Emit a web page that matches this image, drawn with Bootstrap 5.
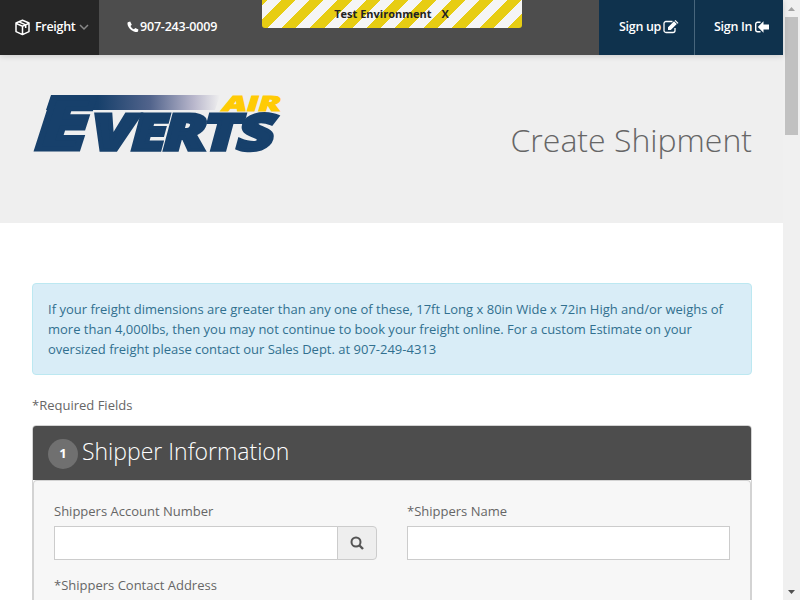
<!DOCTYPE html>
<html lang="en">
<head>
<meta charset="utf-8">
<meta name="viewport" content="width=device-width, initial-scale=1">
<title>Create Shipment</title>
<link href="https://cdn.jsdelivr.net/npm/bootstrap@5.3.0/dist/css/bootstrap.min.css" rel="stylesheet">
<style>
html, body { height: 100%; overflow: hidden; }
body { font-family: "Open Sans", sans-serif; font-size: 13px; line-height: 20px; color: #666; }
.page-area { min-width: 0; }
.topbar { height: 55px; background: #4d4d4d; color: #fff; box-shadow: 0 1px 6px rgba(0,0,0,.16); z-index: 2; font-size: 12.5px; font-weight: 600; letter-spacing: -.3px; flex: none; }
.brand-menu { width: 99px; padding-left: 14px; background: #262626; padding-bottom: 1px; }
.phone-item { padding-left: 28px; padding-bottom: 1px; letter-spacing: -.2px; }
.phone-item span { margin-left: 1px; }
.account-link { background: #0f324d; padding: 0 0 1px 20px; color: #fff; gap: 2px; }
.link-up { width: 95px; }
.link-in { width: 89px; border-left: 1px solid #48667c; padding-left: 19px; }
.env-banner { left: 262px; top: 0; width: 260px; height: 28px; padding-right: 1px; border-radius: 0 0 3px 3px; font-size: 11px; font-weight: 700; letter-spacing: 0; color: #222; background: repeating-linear-gradient(-45deg, #e7cd13 0 10px, #f5f5f5 10px 20px); }
.env-close { margin-left: 10px; }
.page-head { height: 168px; background: #efefef; padding: 0 31px 0 32px; flex: none; }
.page-head h1 { font-size: 32px; font-weight: 300; line-height: 40px; margin: 65px 0 0; color: #666; }
.logo { margin: 38px 0 0 0; overflow: visible; }
.main-area { padding: 60px 31px 0 32px; overflow: hidden; flex: 1; min-height: 0; }
.freight-note { background: #d9edf7; border: 1px solid #bce8f1; border-radius: 4px; color: #31708f; padding: 15px; height: 92px; }
.required-note { margin: 20px 0 10px; }
.panel-box { border: 1px solid #d3d3d3; border-radius: 4px; height: 400px; overflow: hidden; }
.panel-title { height: 54px; background: #4d4d4d; color: #fff; padding: 0 15px; font-size: 23px; font-weight: 300; gap: 4px; }
.panel-title-text { padding-bottom: 2px; }
.step-dot { width: 30px; height: 30px; margin-top: 2px; border-radius: 50%; background: #707070; font-size: 13px; font-weight: 700; }
.panel-fields { background: #f7f7f7; border: 1px solid #d3d3d3; border-width: 1px 1px 0; border-radius: 4px 4px 0 0; height: 346px; padding: 20px 20px 0; }
.field-col { width: 323px; }
.field-col label { margin-bottom: 5px; }
.field-box { height: 34px; border: 1px solid #ccc; border-radius: 0; }
.next-field { margin-top: 15px; }
.find-btn { width: 40px; background: #eee; border: 1px solid #ccc; border-radius: 0 4px 4px 0; margin-left: -1px; padding: 0; }
.scroll-rail { width: 17px; background: #f0f0f0; flex: none; }
.scroll-grip { width: 13px; height: 118px; background: #c1c1c1; }
</style>
</head>
<body class="d-flex bg-white">
<div class="page-area d-flex flex-column flex-grow-1">
  <nav class="topbar d-flex position-relative">
    <div class="brand-menu d-flex align-items-center">
      <svg width="17" height="17" viewBox="0 0 17 17" fill="none" stroke="#fff" stroke-width="1.5" stroke-linejoin="round"><path d="M8.500 1.300 15 4v8.600l-6.500 3-6.500-3V4zM2 4.400l6.500 2.800L15 4.400M8.500 7.200v8.400M5 2.900l6.700 3v3.200"/></svg>
      <span class="ms-1">Freight</span>
      <svg class="ms-1" width="10" height="7" viewBox="0 0 10 7" fill="none" stroke="#888" stroke-width="1.500"><path d="m1 1 4 4 4-4"/></svg>
    </div>
    <div class="phone-item d-flex align-items-center">
      <svg width="12" height="12" viewBox="0 0 12 12" fill="#fff"><path d="M.8 1.200 3.200.4 4.800 3.800 3.500 4.900C4.200 6.400 5.200 7.400 6.900 8.200l1.500-1.300 3 1.700-.4 1.900c-.7.6-1.600.7-2.600.5C4.400 9.900.8 6.300.5 2.900.4 2.200.5 1.600.8 1.200z"/></svg>
      <span>907-243-0009</span>
    </div>
    <div class="ms-auto d-flex">
      <a class="account-link link-up d-flex align-items-center text-decoration-none" href="#">Sign up
        <svg width="16" height="14" viewBox="0 0 16 14"><path d="M12 8v2.500a2 2 0 0 1-2 2H3a2 2 0 0 1-2-2v-7a2 2 0 0 1 2-2h6.500" fill="none" stroke="#fff" stroke-width="1.300"/><path d="m5 7.300 6-6 2.800 2.800-6 6H5zM11.600.8l.9-.7 3 2.900-.9.800z" fill="#fff"/></svg></a>
      <a class="account-link link-in d-flex align-items-center text-decoration-none" href="#">Sign In
        <svg width="15" height="12" viewBox="0 0 15 12"><path d="M6.500 1.200H3.700a2 2 0 0 0-2 2v5.600a2 2 0 0 0 2 2h2.800" fill="none" stroke="#fff" stroke-width="1.400"/><path d="M3.800 6 9.500.3v3.300H15v4.800H9.500v3.300z" fill="#fff"/></svg></a>
    </div>
    <div class="env-banner position-absolute d-flex justify-content-center align-items-center"><span>Test Environment</span><span class="env-close">X</span></div>
  </nav>
  <header class="page-head d-flex justify-content-between align-items-start">
    <svg class="logo" width="250" height="62" viewBox="32 93 250 62" role="img" aria-label="Everts Air">
      <defs><linearGradient id="trail" x1="0" x2="1"><stop offset="0.300" stop-color="#17406b"/><stop offset="0.600" stop-color="#52648c"/><stop offset="0.850" stop-color="#b9b7cc"/><stop offset="1" stop-color="#efefef"/></linearGradient></defs>
      <path d="M51 95h169l-5 15H46z" fill="url(#trail)"/>
      <g font-family="Open Sans" font-weight="800" fill="#17406b" stroke="#17406b">
        <text transform="translate(30.500 149.200) skewX(-17.800) scale(1.300 1)" font-size="72" stroke-width="5.200">E</text>
        <text transform="translate(87 150.300) skewX(-15)" font-size="50" stroke-width="3.400" letter-spacing="-2" textLength="181" lengthAdjust="spacingAndGlyphs">VERTS</text>
      </g>
      <text transform="translate(221 110.500) skewX(-17)" font-family="Open Sans" font-weight="800" font-size="21" fill="#ffcb05" stroke="#ffcb05" stroke-width="1" textLength="58" lengthAdjust="spacingAndGlyphs">AIR</text>
    </svg>
    <h1>Create Shipment</h1>
  </header>
  <main class="main-area">
    <div class="freight-note">If your freight dimensions are greater than any one of these, 17ft Long x 80in Wide x 72in High and/or weighs of more than 4,000lbs, then you may not continue to book your freight online. For a custom Estimate on your oversized freight please contact our Sales Dept. at 907-249-4313</div>
    <p class="required-note">*Required Fields</p>
    <section class="panel-box">
      <h2 class="panel-title d-flex align-items-center mb-0"><span class="step-dot d-flex align-items-center justify-content-center">1</span><span class="panel-title-text">Shipper Information</span></h2>
      <div class="panel-fields">
        <div class="d-flex justify-content-between">
          <div class="field-col">
            <label for="acct" class="d-block">Shippers Account Number</label>
            <div class="d-flex"><input id="acct" class="form-control field-box"><button class="btn find-btn flex-shrink-0 d-flex align-items-center justify-content-center" aria-label="Search"><svg width="14" height="14" viewBox="0 0 14 14" fill="none" stroke="#555" stroke-width="2"><circle cx="6" cy="6" r="4.500"/><path d="m9 9 4 4" stroke-width="2.400"/></svg></button></div>
          </div>
          <div class="field-col">
            <label for="sname" class="d-block">*Shippers Name</label>
            <input id="sname" class="form-control field-box">
          </div>
        </div>
        <div class="next-field">*Shippers Contact Address</div>
      </div>
    </section>
  </main>
</div>
<div class="scroll-rail d-flex flex-column align-items-center">
  <svg width="17" height="17" viewBox="0 0 17 17"><path d="m5 11 3.500-4 3.500 4z" fill="#a3a3a3"/></svg>
  <div class="scroll-grip"></div>
  <svg class="mt-auto" width="17" height="17" viewBox="0 0 17 17"><path d="m5 7 3.500 4L12 7z" fill="#505050"/></svg>
</div>
<script src="https://cdn.jsdelivr.net/npm/bootstrap@5.3.0/dist/js/bootstrap.bundle.min.js"></script>
</body>
</html>
